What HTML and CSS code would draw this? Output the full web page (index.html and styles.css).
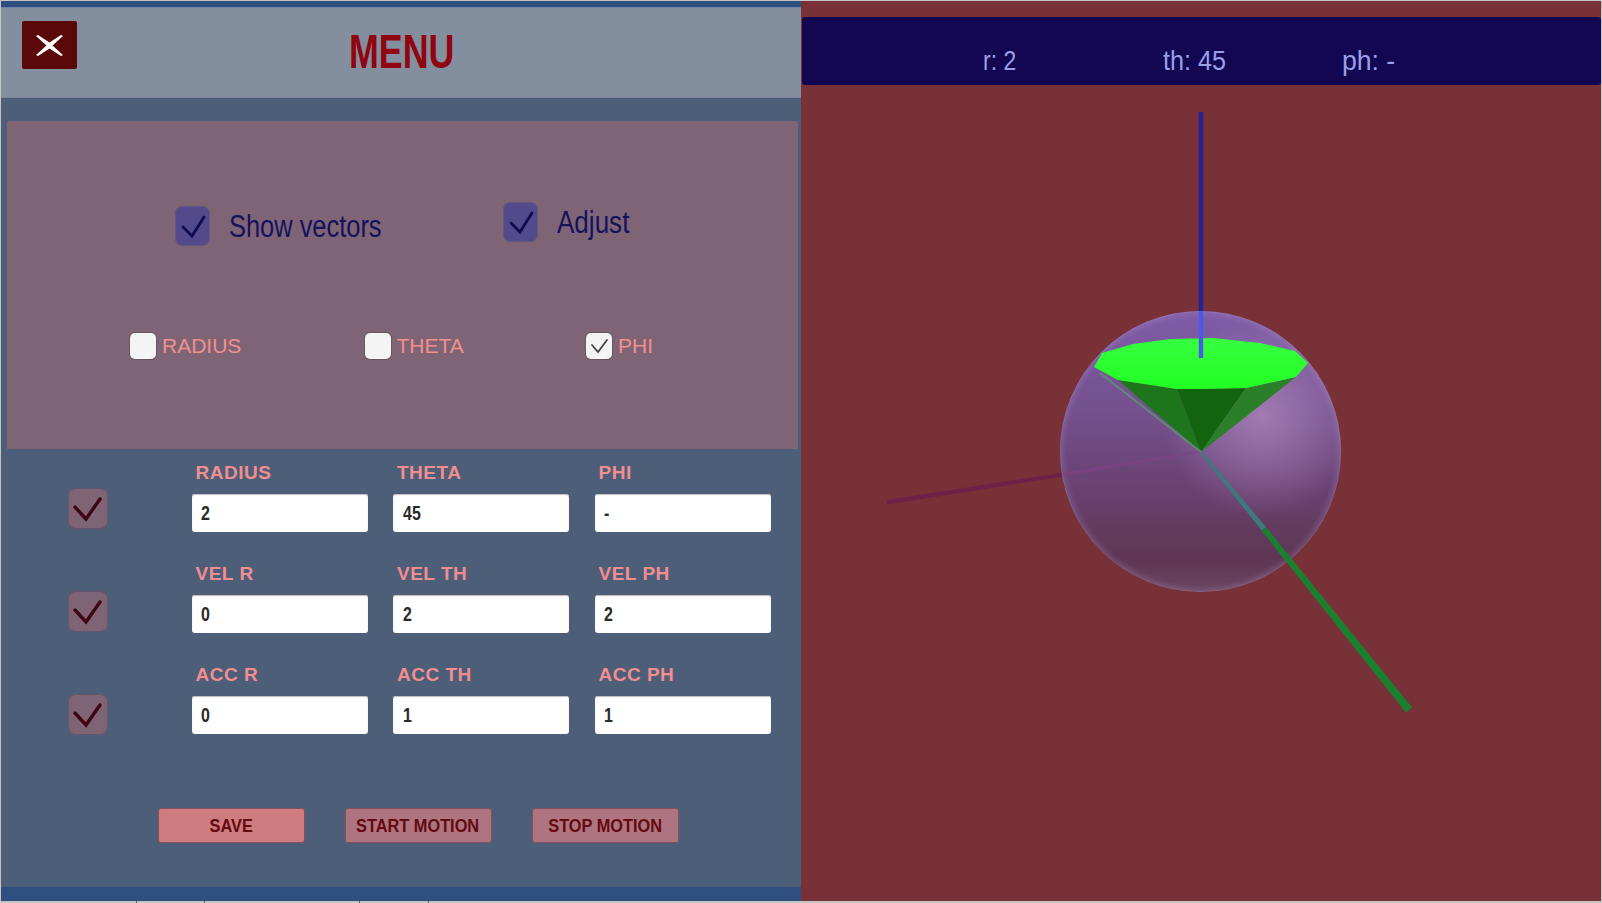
FILE: index.html
```html
<!DOCTYPE html>
<html lang="en">
<head>
<meta charset="utf-8">
<title>Menu</title>
<link rel="stylesheet" href="styles.css">
</head>
<body>
<main class="app">
  <section class="menu">
    <div class="menu-stripe"></div>
    <header class="menu-head">
      <button class="close" type="button" aria-label="Close">
        <svg width="27" height="21" viewBox="0 0 27 21"><path class="close-x" d="M2 0 13.500 7.500 25 0 27 1 16.500 10.500 27 20 25 21 13.500 13.500 2 21 0 20 10.500 10.500 0 1Z"/></svg>
      </button>
      <h1 class="menu-title">MENU</h1>
    </header>
    <div class="menu-body">
      <section class="panel">
        <div class="opts">
          <label class="opt opt-vectors">
            <span class="box box-blue"><svg width="35" height="40" viewBox="0 0 35 40"><path class="tick tick-blue" d="M8 21 17 30 29 11"/></svg></span>
            <span class="opt-label">Show vectors</span>
          </label>
          <label class="opt">
            <span class="box box-blue"><svg width="35" height="40" viewBox="0 0 35 40"><path class="tick tick-blue" d="M8 21 17 30 29 11"/></svg></span>
            <span class="opt-label opt-label-adjust">Adjust</span>
          </label>
        </div>
        <div class="radios">
          <label class="radio radio-1"><span class="mini"></span><span class="radio-label">RADIUS</span></label>
          <label class="radio radio-2"><span class="mini"></span><span class="radio-label">THETA</span></label>
          <label class="radio"><span class="mini"><svg width="26" height="26" viewBox="0 0 26 26"><path class="tick tick-mini" d="M6 12 12 19 21 7"/></svg></span><span class="radio-label">PHI</span></label>
        </div>
      </section>
      <form class="form">
        <span class="side side-1"><svg width="39" height="41" viewBox="0 0 39 41"><path class="tick tick-red" d="M7 19 18 31 32 11"/></svg></span>
        <div class="field"><span class="field-label">RADIUS</span><span class="input"><span class="input-text">2</span></span></div>
        <div class="field"><span class="field-label">THETA</span><span class="input"><span class="input-text">45</span></span></div>
        <div class="field"><span class="field-label">PHI</span><span class="input"><span class="input-text">-</span></span></div>

        <span class="side side-2"><svg width="39" height="41" viewBox="0 0 39 41"><path class="tick tick-red" d="M7 19 18 31 32 11"/></svg></span>
        <div class="field"><span class="field-label">VEL R</span><span class="input"><span class="input-text">0</span></span></div>
        <div class="field"><span class="field-label">VEL TH</span><span class="input"><span class="input-text">2</span></span></div>
        <div class="field"><span class="field-label">VEL PH</span><span class="input"><span class="input-text">2</span></span></div>

        <span class="side side-3"><svg width="39" height="41" viewBox="0 0 39 41"><path class="tick tick-red" d="M7 19 18 31 32 11"/></svg></span>
        <div class="field"><span class="field-label">ACC R</span><span class="input"><span class="input-text">0</span></span></div>
        <div class="field"><span class="field-label">ACC TH</span><span class="input"><span class="input-text">1</span></span></div>
        <div class="field"><span class="field-label">ACC PH</span><span class="input"><span class="input-text">1</span></span></div>
      </form>
      <div class="actions">
        <button class="btn btn-save" type="button"><span class="btn-text">SAVE</span></button>
        <button class="btn" type="button"><span class="btn-text">START MOTION</span></button>
        <button class="btn" type="button"><span class="btn-text">STOP MOTION</span></button>
      </div>
    </div>
    <div class="menu-stripe menu-stripe-foot"></div>
  </section>

  <section class="scene">
    <svg class="scene-art" viewBox="801 0 800 900" width="800" height="900" aria-hidden="true">
      <defs>
        <linearGradient id="sphereBase" x1="0" y1="0" x2="0" y2="1">
          <stop offset="0" stop-color="#7f5ca8"/>
          <stop offset=".35" stop-color="#74508e"/>
          <stop offset=".62" stop-color="#6a4272"/>
          <stop offset=".88" stop-color="#5e3654"/>
          <stop offset="1" stop-color="#6a4560"/>
        </linearGradient>
        <radialGradient id="sphereGlow" gradientUnits="userSpaceOnUse" cx="1262" cy="415" r="100">
          <stop offset="0" stop-color="#a67fb6" stop-opacity=".9"/>
          <stop offset="1" stop-color="#a67fb6" stop-opacity="0"/>
        </radialGradient>
        <radialGradient id="sphereRim">
          <stop offset=".95" stop-color="#b49ad0" stop-opacity="0"/>
          <stop offset=".99" stop-color="#b49ad0" stop-opacity=".18"/>
          <stop offset="1" stop-color="#c0aadc" stop-opacity=".35"/>
        </radialGradient>
        <linearGradient id="disk" x1="0" y1="0" x2="0" y2="1">
          <stop offset="0" stop-color="#36ff40"/>
          <stop offset="1" stop-color="#22ff22"/>
        </linearGradient>
      </defs>
      <polygon class="axis-red" points="887,499 887,503.500 1063,475.500 1063,471.500"/>
      <circle cx="1200.500" cy="450.500" r="140.500" fill="url(#sphereBase)"/>
      <circle cx="1200.500" cy="450.500" r="140.500" fill="url(#sphereGlow)"/>
      <circle cx="1200.500" cy="450.500" r="140.500" fill="url(#sphereRim)"/>
      <polygon class="axis-red-in" points="1063,471.500 1063,475.500 1201,451.500 1201,449.500"/>
      <polygon class="cone-l" points="1118,379 1177,388 1201,451"/>
      <polygon class="cone-c" points="1177,388 1246,387 1201,451"/>
      <polygon class="cone-r" points="1246,387 1296,376 1201,451"/>
      <line class="edge" x1="1100" y1="372" x2="1201" y2="451"/>
      <polygon fill="url(#disk)" points="1094,366 1102,352 1133,343 1170,338 1213,337 1260,342 1295,350 1308,362 1296,376 1246,387 1200,388 1177,388 1118,379"/>
      <rect class="axis-blue" x="1198.800" y="111" width="4.400" height="199"/>
      <rect class="axis-blue-in" x="1198.800" y="310" width="4.400" height="47"/>
      <polygon class="axis-teal" points="1202,450.300 1200,451.700 1261.800,529.800 1266.200,526.200"/>
      <polygon class="axis-green" points="1266.200,526.200 1261.800,529.800 1405.900,711.500 1412.100,706.500"/>
    </svg>
    <div class="hud">
      <span class="hud-item hud-r">r: 2</span>
      <span class="hud-item hud-th">th: 45</span>
      <span class="hud-item hud-ph">ph: -</span>
    </div>
  </section>
</main>
<div class="edge-strip">
  <span class="notch notch-1"></span>
  <span class="notch notch-2"></span>
  <span class="notch notch-3"></span>
  <span class="notch"></span>
</div>
</body>
</html>
```
FILE: styles.css
```css
* { box-sizing: border-box; }
html, body { margin: 0; padding: 0; }
body { width: 1602px; height: 903px; overflow: hidden; background: #c4c4c4; }
.app { display: flex; height: 900px; margin-top: 1px; padding-left: 1px; padding-right: 1px; font-family: "Liberation Sans", Arial, sans-serif; }
.edge-strip { display: flex; height: 2px; padding-left: 136px; }
.notch { width: 1px; height: 2px; background: #555; }
.notch-1 { margin-right: 67px; }
.notch-2 { margin-right: 154px; }
.notch-3 { margin-right: 68px; }

.menu { width: 800px; display: flex; flex-direction: column; background: #4c5e78; }
.menu-stripe { height: 6px; background: #2f4f80; }
.menu-stripe-foot { height: 14px; }
.menu-head { height: 91px; display: flex; align-items: flex-start; background: #838f9f; border-top: 1px solid #6d85a4; border-bottom: 1px solid #78879b; }
.close { width: 55px; height: 48px; margin: 13px 0 0 21px; padding: 0; border: 0; border-radius: 2px; background: #5a0808; display: flex; align-items: center; justify-content: center; }
.close-x { fill: #fff; }
.menu-title { margin: 13px 0 0 272px; font: 700 49px/60px "Liberation Sans", sans-serif; color: #90050f; transform: scaleX(.73); transform-origin: left center; }

.menu-body { flex: 1; display: flex; flex-direction: column; padding-top: 23px; }
.panel { width: 791px; height: 328px; margin-left: 6px; padding-top: 81px; background: #7f6475; border-radius: 2px 2px 0 0; }
.opts { display: flex; height: 44px; padding-left: 168px; }
.opt { display: flex; gap: 19px; align-items: center; height: 40px; }
.opt-vectors { width: 328px; margin-top: 4px; }
.box { width: 35px; height: 40px; display: block; border-radius: 8px; }
.box-blue { background: #534a8c; box-shadow: inset 0 0 0 1px #66567d; }
.box svg, .side svg, .mini svg { display: block; }
.opt-label { margin-top: 2px; font: 31px/40px "Liberation Sans", sans-serif; color: #14125e; transform: scaleX(.82); transform-origin: left center; }
.opt-label-adjust { margin-top: 2px; transform: scaleX(.84); }
.tick { fill: none; stroke-linecap: round; stroke-linejoin: miter; }
.tick-blue { stroke: #0d0b52; stroke-width: 2.8; }
.tick-red { stroke: #3f0512; stroke-width: 3.4; }
.tick-mini { stroke: #444; stroke-width: 1.8; }

.radios { display: flex; margin-top: 87px; padding-left: 123px; }
.radio { display: flex; gap: 6px; align-items: center; height: 26px; }
.radio-1 { width: 234.500px; }
.radio-2 { width: 221.500px; }
.mini { width: 26px; height: 26px; border-radius: 5px; background: #f4f4f4; box-shadow: 0 0 0 1px #66565f; }
.radio-label { font-size: 21px; line-height: 26px; color: #f0908f; }

.form { display: grid; grid-template-columns: 98px repeat(3, 176px); column-gap: 25.5px; row-gap: 32px; padding: 14px 0 0 67px; }
.field { display: flex; flex-direction: column; width: 176px; }
.field-label { height: 20px; margin-bottom: 11px; padding-left: 4px; font-weight: 700; font-size: 19px; line-height: 20px; letter-spacing: .5px; color: #f28d90; }
.input { height: 38px; padding-left: 9.500px; border-radius: 3px; background: #fff; box-shadow: inset 0 1px 1px #bbb; font: 700 21px/38px "Liberation Sans", sans-serif; color: #2a2a2a; }
.input-text { display: inline-block; transform: scaleX(.76); transform-origin: left center; }
.side { width: 40px; height: 41px; border-radius: 8px; background: #7f6475; box-shadow: inset 0 0 0 1px #66566d; }
.side-1 { margin-top: 25px; }
.side-2 { margin-top: 27px; }
.side-3 { margin-top: 29px; }

.actions { display: flex; gap: 40px; margin-top: 73px; padding-left: 156.500px; }
.btn { width: 147px; height: 35px; padding: 0; border: 1px solid #85505c; border-radius: 3px; background: #ae7580; font: 700 19px/33px "Liberation Sans", sans-serif; color: #640a10; }
.btn-save { background: #cf7c80; }
.btn-text { display: inline-block; white-space: nowrap; transform: scaleX(.86); }

.scene { position: relative; flex: 1; background: #783137; }
.scene-art { position: absolute; left: 0; top: 0; display: block; }
.hud { position: relative; height: 68px; margin: 16px 0 0 1px; padding: 26px 0 0 181px; display: flex; background: #120750; border-radius: 3px; }
.hud-item { font: 28px/36px "Liberation Sans", sans-serif; color: #9a9fe8; transform-origin: left center; }
.hud-r { width: 179.500px; transform: scaleX(.82); }
.hud-th { width: 179.500px; transform: scaleX(.9); }
.hud-ph { transform: scaleX(.95); }

.axis-red { fill: #6f2048; }
.axis-red-in { fill: #7c4384; fill-opacity: .75; }
.axis-blue { fill: #22229c; }
.axis-blue-in { fill: #4a5ae8; }
.axis-teal { fill: #3d7a80; }
.axis-green { fill: #1a8030; }
.cone-l { fill: #1d751c; }
.cone-c { fill: #12650e; }
.cone-r { fill: #2a7f28; }
.edge { stroke: #5d8b78; stroke-width: 2; }
```
